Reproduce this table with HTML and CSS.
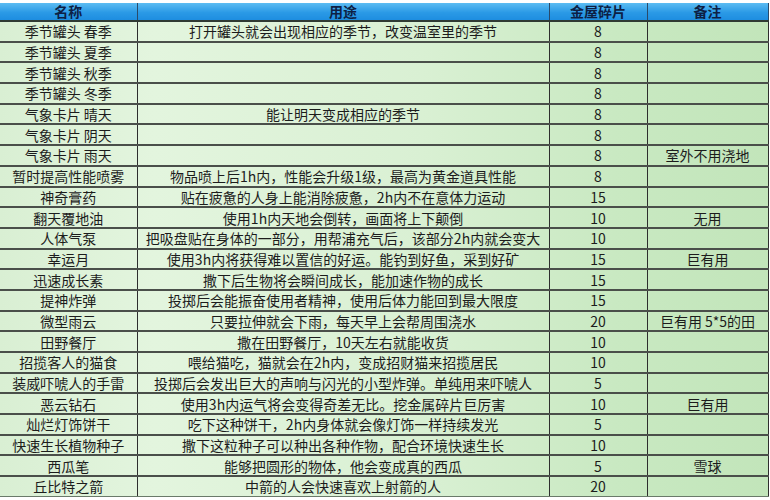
FILE: index.html
```html
<!DOCTYPE html>
<html lang="zh">
<head>
<meta charset="utf-8">
<link rel="stylesheet" href="styles.css">
</head>
<body>
<table class="grid">
  <colgroup>
    <col class="c-name"><col class="c-use"><col class="c-cost"><col class="c-note">
  </colgroup>
  <thead>
    <tr><th>名称</th><th>用途</th><th>金屋碎片</th><th>备注</th></tr>
  </thead>
  <tbody>
    <tr><td>季节罐头 春季</td><td>打开罐头就会出现相应的季节，改变温室里的季节</td><td>8</td><td></td></tr>
    <tr><td>季节罐头 夏季</td><td></td><td>8</td><td></td></tr>
    <tr><td>季节罐头 秋季</td><td></td><td>8</td><td></td></tr>
    <tr><td>季节罐头 冬季</td><td></td><td>8</td><td></td></tr>
    <tr><td>气象卡片 晴天</td><td>能让明天变成相应的季节</td><td>8</td><td></td></tr>
    <tr><td>气象卡片 阴天</td><td></td><td>8</td><td></td></tr>
    <tr><td>气象卡片 雨天</td><td></td><td>8</td><td>室外不用浇地</td></tr>
    <tr><td>暂时提高性能喷雾</td><td>物品喷上后1h内，性能会升级1级，最高为黄金道具性能</td><td>8</td><td></td></tr>
    <tr><td>神奇膏药</td><td>贴在疲惫的人身上能消除疲惫，2h内不在意体力运动</td><td>15</td><td></td></tr>
    <tr><td>翻天覆地油</td><td>使用1h内天地会倒转，画面将上下颠倒</td><td>10</td><td>无用</td></tr>
    <tr><td>人体气泵</td><td>把吸盘贴在身体的一部分，用帮浦充气后，该部分2h内就会变大</td><td>10</td><td></td></tr>
    <tr><td>幸运月</td><td>使用3h内将获得难以置信的好运。能钓到好鱼，采到好矿</td><td>15</td><td>巨有用</td></tr>
    <tr><td>迅速成长素</td><td>撒下后生物将会瞬间成长，能加速作物的成长</td><td>15</td><td></td></tr>
    <tr><td>提神炸弹</td><td>投掷后会能振奋使用者精神，使用后体力能回到最大限度</td><td>15</td><td></td></tr>
    <tr><td>微型雨云</td><td>只要拉伸就会下雨，每天早上会帮周围浇水</td><td>20</td><td>巨有用 5*5的田</td></tr>
    <tr><td>田野餐厅</td><td>撒在田野餐厅，10天左右就能收货</td><td>10</td><td></td></tr>
    <tr><td>招揽客人的猫食</td><td>喂给猫吃，猫就会在2h内，变成招财猫来招揽居民</td><td>10</td><td></td></tr>
    <tr><td>装威吓唬人的手雷</td><td>投掷后会发出巨大的声响与闪光的小型炸弹。单纯用来吓唬人</td><td>5</td><td></td></tr>
    <tr><td>恶云钻石</td><td>使用3h内运气将会变得奇差无比。挖金属碎片巨厉害</td><td>10</td><td>巨有用</td></tr>
    <tr><td>灿烂灯饰饼干</td><td>吃下这种饼干，2h内身体就会像灯饰一样持续发光</td><td>5</td><td></td></tr>
    <tr><td>快速生长植物种子</td><td>撒下这粒种子可以种出各种作物，配合环境快速生长</td><td>10</td><td></td></tr>
    <tr><td>西瓜笔</td><td>能够把圆形的物体，他会变成真的西瓜</td><td>5</td><td>雪球</td></tr>
    <tr><td>丘比特之箭</td><td>中箭的人会快速喜欢上射箭的人</td><td>20</td><td></td></tr>
  </tbody>
</table>
</body>
</html>
```
FILE: styles.css
```css
html, body {
  margin: 0;
  padding: 0;
  background: #ffffff;
}
body {
  padding-top: 3px;
  font-family: "Noto Sans CJK SC", "Noto Sans", "Liberation Sans", sans-serif;
}
.grid {
  width: 768px;
  border-collapse: collapse;
  table-layout: fixed;
  font-size: 14px;
  color: #1c1c1c;
  background: linear-gradient(to right, #d9efd3 0%, #e3f5de 20%, #d9f0d3 55%, #c9e9c2 80%, #c2e5ba 100%);
}
.c-name { width: 137px; }
.c-use { width: 412px; }
.c-cost { width: 98px; }
.c-note { width: 121px; }
.grid th {
  height: 17px;
  padding: 0;
  font-size: 14px;
  font-weight: 700;
  line-height: 17px;
  color: #0d1f45;
  background: linear-gradient(to bottom, #5cbcf2 0%, #2b9ae6 55%, #1d8de0 100%);
  border-left: 1px solid #2a4a6a;
  border-right: 1px solid #2a4a6a;
  border-bottom: 2px solid #2f3a33;
}
.grid th:first-child { border-left: none; }
.grid td {
  height: 18.7px;
  padding: 0;
  line-height: 18px;
  text-align: center;
  white-space: nowrap;
  overflow: hidden;
  border-left: 1px solid #2e2e2e;
  border-right: 1px solid #2e2e2e;
  border-bottom: 2px solid #4a4f4a;
}
.grid td:first-child { border-left: none; }
.grid tbody tr:last-child td { border-bottom: 1px solid #6a7a6a; }
```
